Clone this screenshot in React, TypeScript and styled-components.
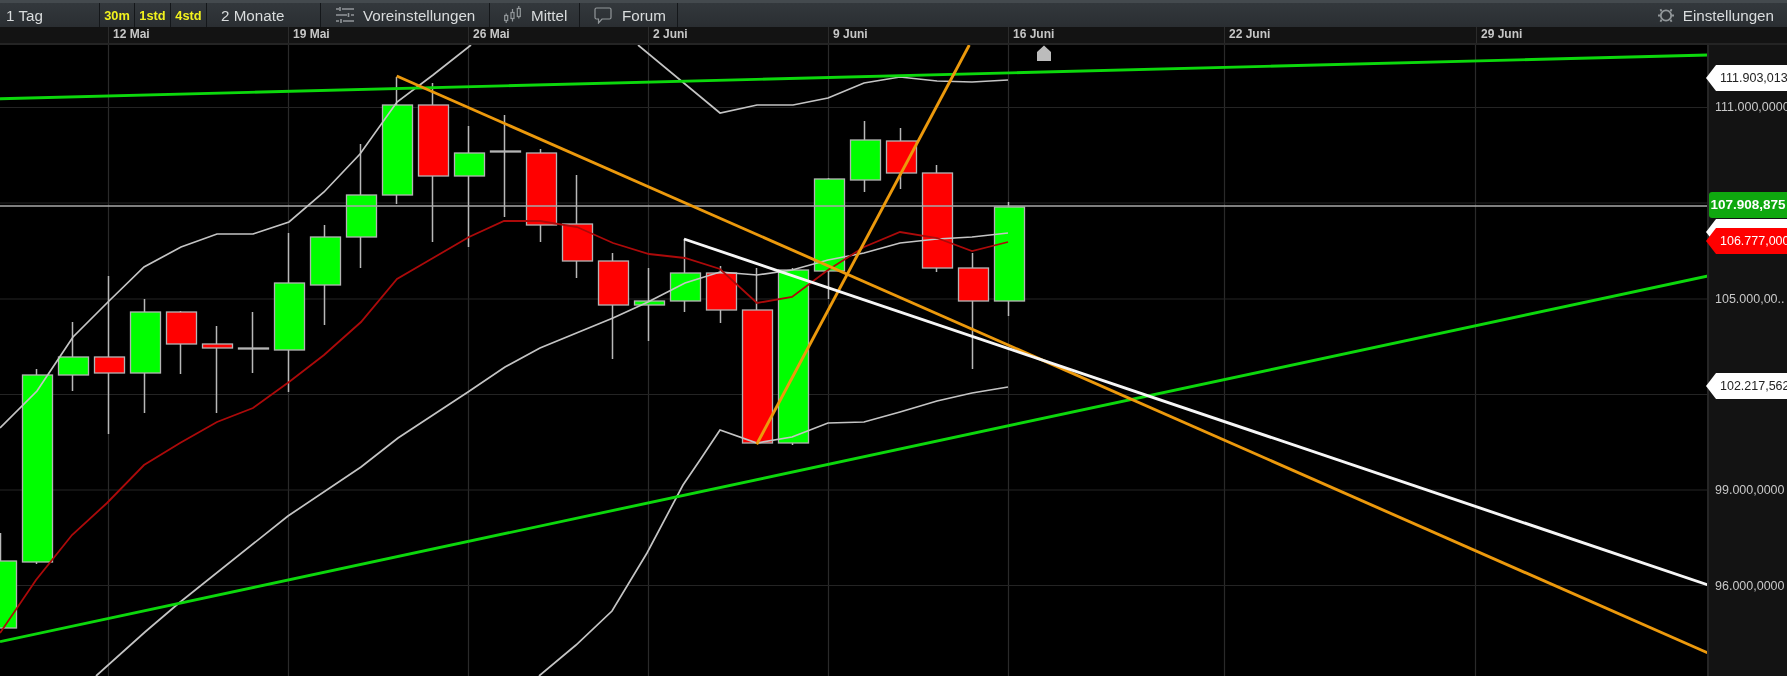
import styled, { createGlobalStyle } from 'styled-components';

const GlobalStyle = createGlobalStyle`
	html, body {
		margin: 0;
		padding: 0;
		background: #000;
		overflow: hidden;
	}
`;

// [top, bottom, high, low, colour] of each day, in page pixels
type Candle = [number, number, number, number, 'g' | 'r' | 'n'];
const candles: Candle[] = [
	[561, 628, 533, 628, 'g'],
	[375, 562, 369, 564, 'g'],
	[357, 375, 322, 391, 'g'],
	[357, 373, 276, 434, 'r'],
	[312, 373, 299, 413, 'g'],
	[312, 344, 311, 374, 'r'],
	[344, 348, 326, 413, 'r'],
	[348, 349, 312, 373, 'n'],
	[283, 350, 233, 392, 'g'],
	[237, 285, 225, 325, 'g'],
	[195, 237, 144, 268, 'g'],
	[105, 195, 77, 204, 'g'],
	[105, 176, 83, 242, 'r'],
	[153, 176, 126, 247, 'g'],
	[151, 152, 115, 217, 'n'],
	[153, 225, 149, 242, 'r'],
	[224, 261, 175, 278, 'r'],
	[261, 305, 253, 359, 'r'],
	[301, 305, 268, 341, 'g'],
	[273, 301, 239, 312, 'g'],
	[273, 310, 266, 323, 'r'],
	[310, 443, 268, 443, 'r'],
	[270, 443, 268, 445, 'g'],
	[179, 271, 178, 299, 'g'],
	[140, 180, 121, 192, 'g'],
	[141, 173, 128, 189, 'r'],
	[173, 268, 165, 272, 'r'],
	[268, 301, 253, 369, 'r'],
	[207, 301, 202, 316, 'g'],
];

const upperBand = '0,428 37,391 73,337 109,301 144,267 181,247 217,234 253,234 289,222 324,192 360,154 397,102 433,75 471,45';
const upperBand2 = '638,45 720,113 757,105 793,105 828,98 864,83 900,77 937,81 972,82 1008,80';
const middleBand =
	'96,676 145,632 179,603 288,516 361,467 398,438 468,392 505,367 540,348 613,318 648,302 685,283 720,272 757,275 792,270 828,260 864,253 900,243 937,239 972,237 1008,233';
const lowerBand = '539,676 576,645 612,611 647,553 683,485 700,460 720,430 757,443 792,437 828,423 864,422 900,412 937,401 972,393 1008,387';
const average =
	'0,633 36,580 72,535 107,503 144,465 180,443 217,422 253,408 289,382 324,355 361,322 397,279 433,258 469,237 504,221 540,221 577,227 613,243 649,254 685,258 720,269 757,303 792,297 828,270 864,247 900,232 937,238 972,251 1008,242';

const dates = [
	{ label: '12 Mai', width: 180 },
	{ label: '19 Mai', width: 180 },
	{ label: '26 Mai', width: 180 },
	{ label: '2 Juni', width: 180 },
	{ label: '9 Juni', width: 180 },
	{ label: '16 Juni', width: 216 },
	{ label: '22 Juni', width: 252 },
	{ label: '29 Juni', width: 311 },
];

const gridX = [108.5, 288.5, 468.5, 648.5, 828.5, 1008.5, 1224.5, 1475.5];
const gridY = [107.5, 203, 299, 394.5, 490, 585.5];
const prices = ['111.000,0000', '', '105.000,00..', '', '99.000,0000', '96.000,0000', '93.000,0000'];

const SlidersIcon = () => (
	<Icon width='18' height='18' viewBox='0 0 18 18'>
		<path d='M0 3h3M6 3h12M0 9h11M15 9h3M0 15h3M7 15h11' strokeWidth='1.6' />
		<path d='M4 1v4M12.5 7v4M5 13v4' strokeWidth='1.6' />
	</Icon>
);

const CandlesIcon = () => (
	<Icon width='17' height='18' viewBox='0 0 17 18'>
		<rect x='0.7' y='9.5' width='3' height='5' />
		<rect x='7' y='6.5' width='3' height='6' />
		<rect x='13.3' y='2.5' width='3' height='8' />
		<path d='M2.2 7.5v2M2.2 14.5v2.5M8.5 3v3.5M8.500 12.5v3M14.8 0v2.5M14.8 10.5v2' />
	</Icon>
);

const BubbleIcon = () => (
	<Icon width='18' height='17' viewBox='0 0 18 17'>
		<path d='M2.5 1h13a1.5 1.5 0 0 1 1.5 1.5v8a1.5 1.5 0 0 1-1.5 1.5H8l-3.5 4v-4h-2A1.5 1.5 0 0 1 1 10.5v-8A1.5 1.5 0 0 1 2.5 1z' />
	</Icon>
);

const GearIcon = () => (
	<Icon width='18' height='17' viewBox='0 0 18 17'>
		<circle cx='9' cy='8.5' r='5.2' strokeWidth='1.8' />
		<path d='M4.5 4.2 3.4 2.2M13.5 4.2l1.100-2M4.5 12.800l-1.100 2M13.5 12.8l1.100 2M3.800 8.5H1M14.2 8.5H17' strokeWidth='1.8' />
	</Icon>
);

export default function App() {
	return (
		<Page>
			<GlobalStyle />
			<Toolbar>
				<ToolItem $width={100} $pad={6}>
					1 Tag
				</ToolItem>
				<IntervalItem $width={35}>30m</IntervalItem>
				<IntervalItem $width={36}>1std</IntervalItem>
				<IntervalItem $width={36}>4std</IntervalItem>
				<ToolItem $width={114} $pad={14}>
					2 Monate
				</ToolItem>
				<ToolItem $width={169} $pad={15} $gap={9}>
					<SlidersIcon />
					Voreinstellungen
				</ToolItem>
				<ToolItem $width={90} $pad={14} $gap={10}>
					<CandlesIcon />
					Mittel
				</ToolItem>
				<ToolItem $width={98} $pad={14} $gap={10}>
					<BubbleIcon />
					Forum
				</ToolItem>
				<SettingsItem>
					<GearIcon />
					Einstellungen
				</SettingsItem>
			</Toolbar>

			<DateRow>
				{dates.map((date) => (
					<DateCell key={date.label} $width={date.width}>
						{date.label}
					</DateCell>
				))}
			</DateRow>

			<ChartRow>
				<Plot viewBox='0 45 1708 631' width='1708' height='631'>
					{gridX.map((x) => (
						<line key={x} x1={x} x2={x} y1='45' y2='676' stroke='#2a2a2a' strokeWidth='1.2' />
					))}
					{gridY.map((y) => (
						<line key={y} x1='0' x2='1708' y1={y} y2={y} stroke='#242424' strokeWidth='1.2' />
					))}

					{candles.map(([top, bottom, high, low, colour], i) => {
						const x = 0.5 + i * 36;
						return (
							<g key={i}>
								<line x1={x} x2={x} y1={high} y2={low} stroke='#b8b8b8' strokeWidth='1.5' />
								<rect
									x={x - 14}
									y={top}
									width='30'
									height={bottom - top}
									fill={colour === 'g' ? '#00ff00' : colour === 'r' ? '#ff0000' : '#bbbbbb'}
									stroke='#b4b4b4'
									strokeWidth='1.3'
								/>
							</g>
						);
					})}

					<line x1='0' x2='1708' y1='206' y2='206' stroke='#a8a8a8' strokeWidth='1.4' />

					<polyline points={upperBand} fill='none' stroke='#c4c4c4' strokeWidth='1.7' />
					<polyline points={upperBand2} fill='none' stroke='#c4c4c4' strokeWidth='1.7' />
					<polyline points={middleBand} fill='none' stroke='#c4c4c4' strokeWidth='1.7' />
					<polyline points={lowerBand} fill='none' stroke='#c4c4c4' strokeWidth='1.7' />
					<polyline points={average} fill='none' stroke='#ac0a0a' strokeWidth='1.8' />

					<line x1='0' y1='98.7' x2='1708' y2='55' stroke='#0cd80c' strokeWidth='2.9' />
					<line x1='0' y1='641.7' x2='1708' y2='276' stroke='#0cd80c' strokeWidth='2.9' />
					<line x1='396.7' y1='76' x2='1708' y2='653' stroke='#ec990c' strokeWidth='2.9' />
					<line x1='756.7' y1='444.3' x2='969.3' y2='45' stroke='#ec990c' strokeWidth='2.9' />
					<line x1='684' y1='239' x2='1708' y2='585' stroke='#f6f6f6' strokeWidth='2.9' />

					<path d='M1037 52l7-6.5 7 6.500v9h-14z' fill='#bcbcbc' />
				</Plot>

				<Axis>
					{prices.map((price, i) => (
						<AxisTick key={i}>{price}</AxisTick>
					))}
				</Axis>

				<PriceTag $top={174} $bg='#fff' $fg='#fff' />
				<PriceTag $top={183} $bg='#ff0000' $fg='#fff'>
					106.777,000
				</PriceTag>
				<PriceTag $top={20} $bg='#fff' $fg='#222'>
					111.903,013
				</PriceTag>
				<PriceTag $top={328} $bg='#fff' $fg='#222'>
					102.217,562
				</PriceTag>
				<LastPrice>107.908,875</LastPrice>
			</ChartRow>
		</Page>
	);
}

const Page = styled.div`
	width: 1787px;
	height: 676px;
	display: flex;
	flex-direction: column;
	overflow: hidden;
	background: #000;
	font-family: 'Liberation Sans', Arial, sans-serif;
	filter: blur(0.4px);
`;

const Toolbar = styled.div`
	display: flex;
	flex: none;
	height: 27px;
	box-sizing: border-box;
	border-top: 3px solid #444a4e;
	background: linear-gradient(#33383c, #2a2e32);
	color: #d9dcdd;
	font-size: 15.2px;
`;

const ToolItem = styled.div<{ $width: number; $pad?: number; $gap?: number }>`
	display: flex;
	align-items: center;
	gap: ${(p) => p.$gap ?? 0}px;
	box-sizing: border-box;
	width: ${(p) => p.$width}px;
	padding-left: ${(p) => p.$pad ?? 0}px;
	border-right: 1px solid #14171a;
`;

const IntervalItem = styled(ToolItem)`
	justify-content: center;
	color: #f2f21e;
	font-size: 12.8px;
	font-weight: bold;
`;

const SettingsItem = styled.div`
	display: flex;
	align-items: center;
	gap: 8px;
	margin-left: auto;
	padding-right: 13px;
`;

const Icon = styled.svg`
	flex: none;
	fill: none;
	stroke: #92979a;
	stroke-width: 1.2;
`;

const DateRow = styled.div`
	display: flex;
	flex: none;
	height: 18px;
	box-sizing: border-box;
	padding-left: 108px;
	border-bottom: 2px solid #242424;
	background: #131313;
`;

const DateCell = styled.div<{ $width: number }>`
	flex: none;
	box-sizing: border-box;
	width: ${(p) => p.$width}px;
	padding-left: 4px;
	border-left: 1px solid #2b2b2b;
	color: #c6c6c6;
	font-size: 12px;
	font-weight: bold;
	line-height: 15px;
`;

const ChartRow = styled.div`
	position: relative;
	display: flex;
	flex: 1;
	min-height: 0;
`;

const Plot = styled.svg`
	display: block;
	flex: none;
	background: #000;
`;

const Axis = styled.div`
	flex: 1;
	box-sizing: border-box;
	padding: 14.6px 0 0 6px;
	overflow: hidden;
	border-left: 2px solid #262626;
	margin-left: -1px;
	background: #131313;
`;

const AxisTick = styled.div`
	display: flex;
	align-items: center;
	height: 95.7px;
	color: #c8c8c8;
	font-size: 12.5px;
	white-space: nowrap;
`;

// the pointed flag that sits on the axis and marks a value of an indicator
const PriceTag = styled.div<{ $top: number; $bg: string; $fg: string }>`
	position: absolute;
	top: ${(p) => p.$top}px;
	left: 1706px;
	right: 0;
	height: 26px;
	box-sizing: border-box;
	padding-left: 14px;
	overflow: hidden;
	clip-path: polygon(10px 0, 100% 0, 100% 100%, 10px 100%, 0 50%);
	background: ${(p) => p.$bg};
	color: ${(p) => p.$fg};
	font-size: 12.5px;
	line-height: 26px;
	white-space: nowrap;
`;

const LastPrice = styled.div`
	position: absolute;
	top: 147px;
	left: 1708.5px;
	right: 0;
	height: 26px;
	box-sizing: border-box;
	padding-left: 2px;
	overflow: hidden;
	border-radius: 3px 0 0 3px;
	background: #0fa80f;
	color: #fff;
	font-size: 13.5px;
	font-weight: bold;
	line-height: 26px;
	white-space: nowrap;
`;
